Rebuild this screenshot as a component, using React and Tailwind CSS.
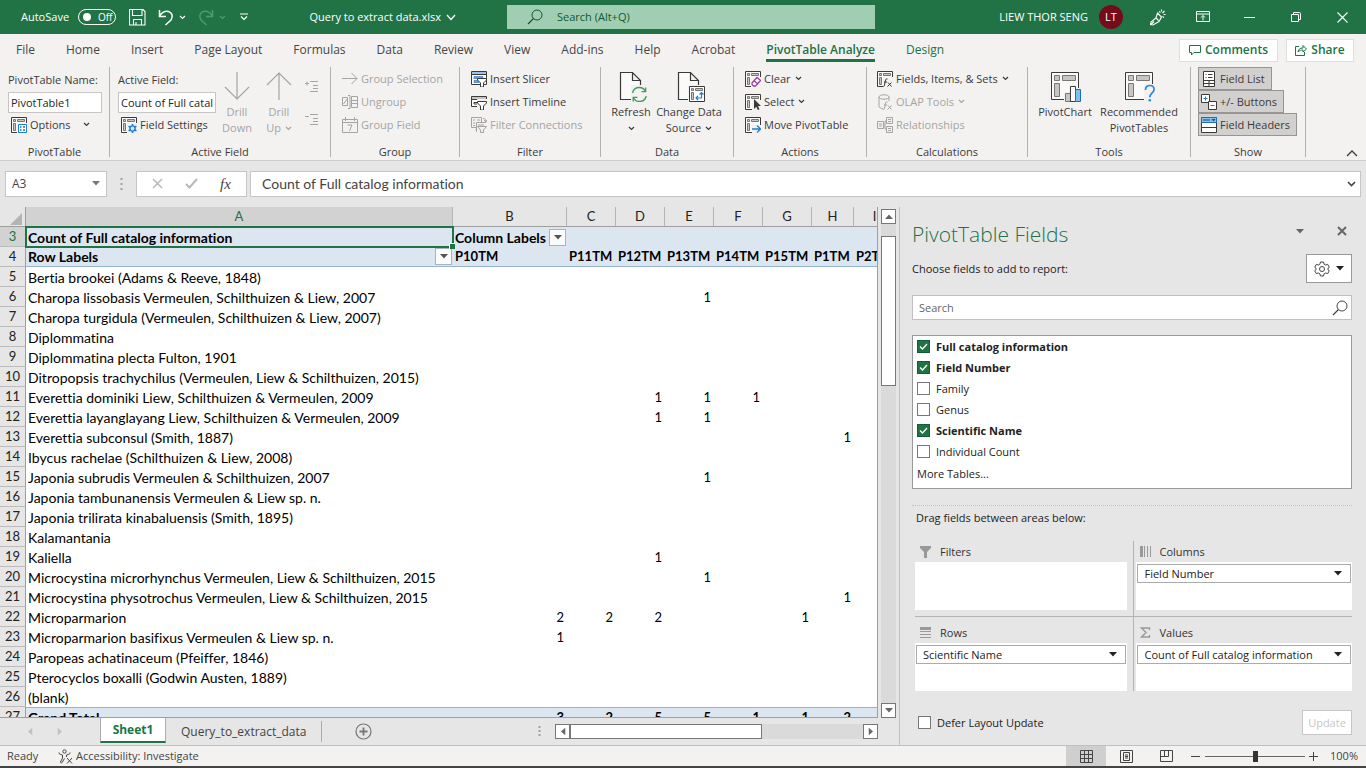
import { useState } from 'react';

const TABS = [
  'File', 'Home', 'Insert', 'Page Layout', 'Formulas', 'Data', 'Review', 'View',
  'Add-ins', 'Help', 'Acrobat', 'PivotTable Analyze', 'Design',
];

const COLUMNS = [
  { letter: 'A', width: 'w-[427px]' },
  { letter: 'B', width: 'w-[114px]', label: 'P10TM' },
  { letter: 'C', width: 'w-[49px]', label: 'P11TM' },
  { letter: 'D', width: 'w-[49px]', label: 'P12TM' },
  { letter: 'E', width: 'w-[49px]', label: 'P13TM' },
  { letter: 'F', width: 'w-[49px]', label: 'P14TM' },
  { letter: 'G', width: 'w-[49px]', label: 'P15TM' },
  { letter: 'H', width: 'w-[42px]', label: 'P1TM' },
  { letter: 'I', width: 'w-[42px]', label: 'P2TM' },
];

const VALUE_COLUMNS = COLUMNS.slice(1);

const ROWS = [
  { n: 5, name: 'Bertia brookei (Adams & Reeve, 1848)' },
  { n: 6, name: 'Charopa lissobasis Vermeulen, Schilthuizen & Liew, 2007', E: 1 },
  { n: 7, name: 'Charopa turgidula (Vermeulen, Schilthuizen & Liew, 2007)' },
  { n: 8, name: 'Diplommatina' },
  { n: 9, name: 'Diplommatina plecta Fulton, 1901' },
  { n: 10, name: 'Ditropopsis trachychilus (Vermeulen, Liew & Schilthuizen, 2015)' },
  { n: 11, name: 'Everettia dominiki Liew, Schilthuizen & Vermeulen, 2009', D: 1, E: 1, F: 1 },
  { n: 12, name: 'Everettia layanglayang Liew, Schilthuizen & Vermeulen, 2009', D: 1, E: 1 },
  { n: 13, name: 'Everettia subconsul (Smith, 1887)', H: 1 },
  { n: 14, name: 'Ibycus rachelae (Schilthuizen & Liew, 2008)' },
  { n: 15, name: 'Japonia subrudis Vermeulen & Schilthuizen, 2007', E: 1 },
  { n: 16, name: 'Japonia tambunanensis Vermeulen & Liew sp. n.' },
  { n: 17, name: 'Japonia trilirata kinabaluensis (Smith, 1895)' },
  { n: 18, name: 'Kalamantania' },
  { n: 19, name: 'Kaliella', D: 1 },
  { n: 20, name: 'Microcystina microrhynchus Vermeulen, Liew & Schilthuizen, 2015', E: 1 },
  { n: 21, name: 'Microcystina physotrochus Vermeulen, Liew & Schilthuizen, 2015', H: 1 },
  { n: 22, name: 'Microparmarion', B: 2, C: 2, D: 2, G: 1 },
  { n: 23, name: 'Microparmarion basifixus Vermeulen & Liew sp. n.', B: 1 },
  { n: 24, name: 'Paropeas achatinaceum (Pfeiffer, 1846)' },
  { n: 25, name: 'Pterocyclos boxalli (Godwin Austen, 1889)' },
  { n: 26, name: '(blank)' },
];

const TOTALS = { B: 3, C: 2, D: 5, E: 5, F: 1, G: 1, H: 2 };

const FIELDS = [
  { name: 'Full catalog information', checked: true },
  { name: 'Field Number', checked: true },
  { name: 'Family', checked: false },
  { name: 'Genus', checked: false },
  { name: 'Scientific Name', checked: true },
  { name: 'Individual Count', checked: false },
];

/* ---------- icons ---------- */

function Svg({ w = 16, h = 16, children, className = '' }) {
  return (
    <svg
      width={w}
      height={h}
      viewBox={`0 0 ${w} ${h}`}
      fill="none"
      stroke="currentColor"
      aria-hidden="true"
      className={`shrink-0 ${className}`}
    >
      {children}
    </svg>
  );
}

function Chevron({ className = '' }) {
  return (
    <Svg w={7} h={5} className={className}>
      <path d="M1 1l2.500 2.500L6 1" strokeWidth="1.200" />
    </Svg>
  );
}

function Triangle({ className = '' }) {
  return (
    <Svg w={8} h={5} className={className}>
      <path d="M0 0h8L4 4.500z" fill="currentColor" stroke="none" />
    </Svg>
  );
}

function PivotBase() {
  return (
    <>
      <path d="M.5.5h15v15H.5z" fill="#fafafa" stroke="#3b3a39" />
      <path d="M2.500 2.500h2v2h-2zM6.500 2.500h7v2h-7zM2.500 6.500h2v7h-2z" fill="#c8c6c4" stroke="#797775" />
    </>
  );
}

const OptionsIcon = () => (
  <Svg>
    <PivotBase />
    <path d="M6 6h10v10H6z" fill="#f3f2f1" stroke="none" />
    <path d="M7.500 7.500h8v8h-8z" fill="#fff" stroke="#1e7fd0" />
    <path d="M9 10h1.500M12 10h2M9 13h1.500M12 13h2" stroke="#1e6fb8" strokeWidth="1.500" />
  </Svg>
);

const FieldSettingsIcon = () => (
  <Svg>
    <PivotBase />
    <path d="M6 6h10v10H6z" fill="#f3f2f1" stroke="none" />
    <circle cx="11.500" cy="11.500" r="2.600" fill="#cfe6f8" stroke="#1e7fd0" strokeWidth="1.400" />
    <path d="M11.500 7v1.800M11.500 14.200V16M7.600 9.200l1.600.9M13.800 12.900l1.600.9M7.600 13.800l1.600-.9M13.800 10.100l1.600-.9" stroke="#1e7fd0" strokeWidth="1.700" />
  </Svg>
);

const DrillArrow = ({ up }) => (
  <Svg w={26} h={32}>
    {up ? <path d="M13 30V2.500M1 15L13 3l12 12" strokeWidth="1.200" /> : <path d="M13 2v27.500M1 17l12 12 12-12" strokeWidth="1.200" />}
  </Svg>
);

const ExpandIcon = ({ minus }) => (
  <Svg w={15} h={14}>
    <path d="M1 4.500h4M6 2.500h8M9 6.500h5M9 9.500h5M6 12.500h8" />
    {!minus && <path d="M3 2.500v4" />}
  </Svg>
);

const GroupSelectionIcon = () => (
  <Svg>
    <path d="M0 7.500h15M9.500 2l5.500 5.500L9.500 13" />
  </Svg>
);

const UngroupIcon = () => (
  <Svg>
    <path d="M.5 3.500h5v8h-5zM1.500 10l3.500-5M6 1.500h2v13H6M9.500 2.500h6v11h-6zM9.500 6.500h6M9.500 9.500h6" />
  </Svg>
);

const GroupFieldIcon = () => (
  <Svg>
    <path d="M.5 2.500h15v13H.5zM.5 5.500h15M3.500 0v4M12.500 0v4M5.500 8h4.500l-2.500 6" />
  </Svg>
);

const Funnel = ({ fill = '#fff', stroke = '#3b3a39' }) => (
  <>
    <path d="M6 5h10v11H6z" fill="#f3f2f1" stroke="none" />
    <path d="M6.500 7.500h9v1.500l-3 3v4h-3v-4l-3-3z" fill={fill} stroke={stroke} />
  </>
);

const SlicerIcon = () => (
  <Svg>
    <path d="M.5.5h15v13H.5z" fill="#fff" stroke="#3b3a39" />
    <path d="M1 1h14v2.500H1z" fill="#9fc3e6" stroke="none" />
    <path d="M1 3.500h14" stroke="#3b3a39" />
    <path d="M3 5.500h9v2H3zM3 9.500h5v2H3z" fill="#5aa5e0" stroke="#2b6fb0" strokeWidth=".6" />
    <path d="M6.500 7.500h9v1.500l-3 3v4h-3v-4l-3-3z" fill="#fff" stroke="#3b3a39" />
  </Svg>
);

const TimelineIcon = () => (
  <Svg>
    <path d="M.5 2.500h15v10H.5z" fill="#fff" stroke="#3b3a39" />
    <path d="M1 3h14v2.500H1z" fill="#c8c6c4" stroke="none" />
    <path d="M1 5.500h14M3 8.500h5v1.500H3z" stroke="#3b3a39" />
    <Funnel />
  </Svg>
);

const FilterConnectionsIcon = () => (
  <Svg>
    <path d="M.5.5h10v10H.5zM2 3h2M6 3h3M2 6h2M6 5.500h3M2 8.500h2M4.500 12.500h3M12 1.500c2 0 3 1 3 3M13 3l2 2 1-2" />
    <path d="M5 5h11v11H5z" fill="#f3f2f1" stroke="none" />
    <path d="M5.500 15V5.500H15M7 8h6M6.500 9.500h9l-3 3.500v2.500h-3V13z" />
  </Svg>
);

const Page = () => (
  <path d="M5.500 2.500h12l8 8v19h-20zM17.500 2.500v8h8" fill="#fafafa" stroke="#3b3a39" strokeWidth="1.200" />
);

const RefreshIcon = () => (
  <Svg w={32} h={32}>
    <Page />
    <path d="M16 15h16v17H16z" fill="#f3f2f1" stroke="none" />
    <path d="M17.500 23c.8-3.300 3.500-5.500 6.800-5.500 2.700 0 5 1.400 6.200 4M30.700 17.500v4.200h-4.200M31.300 26c-.8 3.300-3.500 5.500-6.800 5.500-2.700 0-5-1.400-6.200-4M18.200 31.500v-4.200h4.200" stroke="#3f9c5c" strokeWidth="1.300" />
  </Svg>
);

const ChangeSourceIcon = () => (
  <Svg w={32} h={32}>
    <Page />
    <path d="M15 15h17v17H15z" fill="#f3f2f1" stroke="none" />
    <path d="M16.500 16.500h15v15h-15z" fill="#fff" stroke="#3b3a39" />
    <path d="M18.500 18.500h2v2h-2zM22.500 18.500h7v2h-7zM18.500 22.500h2v7h-2z" fill="#c8c6c4" stroke="#797775" />
    <path d="M28.500 22.500v5.500h-5.500M26.500 24.500l2-2 2 2M25 26l-2 2 2 2" stroke="#1e7fd0" strokeWidth="1.200" />
  </Svg>
);

const ClearIcon = () => (
  <Svg>
    <PivotBase />
    <path d="M6 6h10v10H6z" fill="#f3f2f1" stroke="none" />
    <path d="M7 12l5-5.500 3.500 3L10.500 15H8.500L7 13.500zM9 9.800l3.500 3" fill="#fff" stroke="#a33bb0" strokeWidth="1.300" />
  </Svg>
);

const SelectIcon = () => (
  <Svg>
    <PivotBase />
    <path d="M7 6h9v10H7z" fill="#f3f2f1" stroke="none" />
    <path d="M9 5v10l2.300-2.200 1.500 3.200 1.700-.8-1.500-3.200H16z" fill="#3b3a39" stroke="none" />
  </Svg>
);

const MoveIcon = () => (
  <Svg>
    <PivotBase />
    <path d="M7 8h9v8H7z" fill="#f3f2f1" stroke="none" />
    <path d="M7 12h8.500M12 8.500l3.500 3.500-3.500 3.500" stroke="#1e7fd0" strokeWidth="1.300" />
  </Svg>
);

const FxMark = () => (
  <path d="M10.500 8c-1.500-.5-2 .5-2.200 2l-.8 4c-.2 1.500-1 1.800-1.800 1.500M7 11h3M11 11.500l3.500 4M14.500 11.500l-4 4" />
);

const FieldsItemsIcon = () => (
  <Svg>
    <PivotBase />
    <path d="M6 6h10v10H6z" fill="#f3f2f1" stroke="none" />
    <FxMark />
  </Svg>
);

const OlapIcon = () => (
  <Svg>
    <path d="M2 3v9.500c0 1.200 2 2 4 2M2 3c0-1.300 2.200-2.200 5-2.200S12 1.700 12 3s-2.200 2.200-5 2.200S2 4.300 2 3zM12 3v4" />
    <FxMark />
  </Svg>
);

const RelationshipsIcon = () => (
  <Svg>
    <path d="M.5 4.500h6v7h-6zM2 7h3M2 9h3M9.500.5h6v6h-6zM11 2.500h3M11 4.500h3M9.500 9.500h6v6h-6zM11 11.500h3M11 13.500h3M6.500 8H8V4h1.500M8 8v4h1.500" />
  </Svg>
);

const LargePivot = ({ children }) => (
  <Svg w={32} h={32}>
    <path d="M2.500 2.500h27v27h-27z" fill="#fafafa" stroke="#3b3a39" />
    <path d="M5.500 5.500h5v5h-5zM13.500 5.500h13v5h-13zM5.500 13.500h5v13h-5z" fill="#c8c6c4" stroke="#797775" />
    {children}
  </Svg>
);

const PivotChartIcon = () => (
  <LargePivot>
    <path d="M15 22h5v-7h7v3h5v14H15z" fill="#f3f2f1" stroke="none" />
    <path d="M16.500 23.500h5v8h-5z" fill="#c8c6c4" stroke="#797775" />
    <path d="M21.500 16.500h5v15h-5z" fill="#fff" stroke="#3b3a39" />
    <path d="M26.500 19.500h5v12h-5z" fill="#83beec" stroke="#1e6fb8" />
  </LargePivot>
);

const RecommendedIcon = () => (
  <LargePivot>
    <path d="M21 14h11v18H21z" fill="#f3f2f1" stroke="none" />
    <path d="M22.500 20c0-2.800 1.800-4.500 4.300-4.500s4.300 1.500 4.300 4c0 3.200-4.300 3.700-4.300 7.700" stroke="#2b88d8" strokeWidth="1.700" />
    <circle cx="26.800" cy="30.300" r="1.300" fill="#2b88d8" stroke="none" />
  </LargePivot>
);

const FieldListIcon = () => (
  <Svg>
    <path d="M2.500.5h11v15h-11z" fill="#fff" stroke="#3b3a39" />
    <path d="M2.500 9.500h11M2.500 12.500h11M8 9.500v6M4.500 3.500h1M7 3.500h4.500M4.500 6.500h1M7 6.500h4.500" stroke="#3b3a39" />
  </Svg>
);

const PlusMinusIcon = () => (
  <Svg>
    <path d="M.5.5h8v8h-8z" fill="#fff" stroke="#3b3a39" />
    <path d="M7.500 7.500h8v8h-8z" fill="#fff" stroke="#3b3a39" />
    <path d="M2.500 4.500h4M4.500 2.500v4M9.500 11.500h4" stroke="#1e7fd0" />
  </Svg>
);

const HeadersIcon = () => (
  <Svg>
    <path d="M.5.5h15v15H.5z" fill="#fff" stroke="#3b3a39" />
    <path d="M.5.5h15v5H.5z" fill="#83beec" stroke="#1e6fb8" />
    <path d="M.5 10.500h15" stroke="#3b3a39" />
    <path d="M2 3h7" stroke="#1e4f80" />
    <path d="M10.500 2h4l-2 2.500z" fill="#1e4f80" stroke="none" />
  </Svg>
);

const SearchIcon = ({ className }) => (
  <Svg className={className}>
    <circle cx="10" cy="6" r="5" />
    <path d="M6.500 9.500L1 15" strokeWidth="1.200" />
  </Svg>
);

const SaveIcon = () => (
  <Svg w={17} h={17}>
    <path d="M.5.5h13.500l2 2v13.500H.5zM3.500.5v6h9.500v-6M4.500 16v-5.500h8V16M7 13v3" strokeWidth="1.100" />
  </Svg>
);

const UndoIcon = ({ flip }) => (
  <Svg w={16} h={17} className={flip ? '-scale-x-100' : ''}>
    <path d="M1.500 1v6.500H8M1.500 7C4 3.500 7 1.500 10.500 2.500s5 5 2.500 8.500l-5.500 5" strokeWidth="1.500" />
  </Svg>
);

const PenIcon = () => (
  <Svg w={17} h={17}>
    <path d="M8.500 4l4 4-2.500 4.500-6 3.500-2.500-.5.500-2.500L7 9zM7 9l2.500 2.500M5 12.500l-3 3M10 2.500l1.500 1M12.500.5v2M15.500 2l-2 2M16.500 5.500h-2M13.500 7.500l1.500 1" strokeWidth="1.100" />
  </Svg>
);

const RibbonDisplayIcon = () => (
  <Svg w={14} h={12}>
    <path d="M.5.5h13v10H.5zM.5 3h13M7 9.500v-5M5 6.500l2-2 2 2" />
  </Svg>
);

const GearIcon = () => (
  <Svg w={16} h={16} className="text-[#444]">
    <path d="M6.500 1h3l.6 2.200 1.400.8 2.200-.6 1.500 2.600L13.700 8l1.500 2-1.500 2.600-2.200-.6-1.400.8-.6 2.200h-3l-.6-2.200-1.400-.8-2.200.6L.8 10l1.500-2L.8 6l1.500-2.600 2.200.6 1.400-.8z" />
    <circle cx="8" cy="8" r="2.500" />
  </Svg>
);

const AccessibilityIcon = () => (
  <Svg w={15} h={15}>
    <circle cx="6.500" cy="2.500" r="1.700" />
    <path d="M1 3.500c-.7.800 0 1.500 3.500 2.500v3L2.500 13c0 1.200 1.200 1.200 1.700.3L6.500 9.500M12 3.500c.7.800 0 1.500-3.500 2.500v2M9 9l5 5.500M14 9l-5 5.500" />
  </Svg>
);

/* ---------- ribbon ---------- */

function Group({ title, width, children }) {
  return (
    <section className={`${width} flex shrink-0 flex-col border-r border-[#b3b0ad]`}>
      <div className="flex h-[69px]">{children}</div>
      <h2 className="mt-auto text-center leading-[10px]">{title}</h2>
    </section>
  );
}

function SmallButton({ icon, label, menu, disabled }) {
  return (
    <button type="button" disabled={disabled} className="flex h-[23px] items-center gap-[3px] whitespace-nowrap disabled:text-[#a6a4a2]">
      {icon}
      <span>{label}</span>
      {menu && <Chevron className="ml-px" />}
    </button>
  );
}

function LargeButton({ icon, lines, width, menu, disabled }) {
  return (
    <button type="button" disabled={disabled} className={`${width} flex shrink-0 flex-col items-center whitespace-nowrap pt-[3px] leading-4 disabled:text-[#a6a4a2]`}>
      {icon}
      <span className="mt-[2px]">{lines[0]}</span>
      <span className="flex h-4 items-center gap-1">
        {lines[1]}
        {menu && <Chevron />}
      </span>
    </button>
  );
}

function ShowButton({ icon, label }) {
  return (
    <button type="button" aria-pressed="true" className="flex h-[23px] items-center gap-[3px] whitespace-nowrap border border-[#979593] bg-[#d2d0ce] pl-[2px] pr-[6px]">
      {icon}
      <span>{label}</span>
    </button>
  );
}

function Ribbon() {
  return (
    <div className="flex h-[94px] shrink-0 pb-[3px] pt-px text-[#3b3a39]">
      <Group title="PivotTable" width="w-[110px]">
        <div className="flex flex-col pl-2">
          <label htmlFor="pivot-name" className="h-[26px] leading-[25px]">PivotTable Name:</label>
          <input id="pivot-name" defaultValue="PivotTable1" className="h-[21px] w-[94px] border border-[#c8c6c4] bg-white px-[2px] text-[#252423]" />
          <div className="flex items-center gap-3 pl-[3px]">
            <SmallButton icon={<OptionsIcon />} label="Options" />
            <Chevron />
          </div>
        </div>
      </Group>

      <Group title="Active Field" width="w-[221px]">
        <div className="flex w-[106px] flex-col pl-2">
          <label htmlFor="active-field" className="h-[26px] leading-[25px]">Active Field:</label>
          <input id="active-field" defaultValue="Count of Full catalog information" className="h-[21px] w-[98px] border border-[#c8c6c4] bg-white px-[2px] text-[#252423]" />
          <div className="pl-[3px]">
            <SmallButton icon={<FieldSettingsIcon />} label="Field Settings" />
          </div>
        </div>
        <LargeButton width="w-[42px]" icon={<DrillArrow />} lines={['Drill', 'Down']} disabled />
        <LargeButton width="w-[42px]" icon={<DrillArrow up />} lines={['Drill', 'Up']} menu disabled />
        <div className="flex flex-col gap-[19px] pl-1 pt-3 text-[#a6a4a2]">
          <button type="button" disabled aria-label="Expand Field"><ExpandIcon /></button>
          <button type="button" disabled aria-label="Collapse Field"><ExpandIcon minus /></button>
        </div>
      </Group>

      <Group title="Group" width="w-[129px]">
        <div className="pl-[11px]">
          <SmallButton icon={<GroupSelectionIcon />} label="Group Selection" disabled />
          <SmallButton icon={<UngroupIcon />} label="Ungroup" disabled />
          <SmallButton icon={<GroupFieldIcon />} label="Group Field" disabled />
        </div>
      </Group>

      <Group title="Filter" width="w-[141px]">
        <div className="pl-[11px]">
          <SmallButton icon={<SlicerIcon />} label="Insert Slicer" />
          <SmallButton icon={<TimelineIcon />} label="Insert Timeline" />
          <SmallButton icon={<FilterConnectionsIcon />} label="Filter Connections" disabled />
        </div>
      </Group>

      <Group title="Data" width="w-[133px]">
        <div className="flex pl-2">
          <LargeButton width="w-[44px]" icon={<RefreshIcon />} lines={['Refresh', '']} menu />
          <LargeButton width="w-[72px]" icon={<ChangeSourceIcon />} lines={['Change Data', 'Source']} menu />
        </div>
      </Group>

      <Group title="Actions" width="w-[133px]">
        <div className="pl-[11px]">
          <SmallButton icon={<ClearIcon />} label="Clear" menu />
          <SmallButton icon={<SelectIcon />} label="Select" menu />
          <SmallButton icon={<MoveIcon />} label="Move PivotTable" />
        </div>
      </Group>

      <Group title="Calculations" width="w-[161px]">
        <div className="pl-[10px]">
          <SmallButton icon={<FieldsItemsIcon />} label="Fields, Items, & Sets" menu />
          <SmallButton icon={<OlapIcon />} label="OLAP Tools" menu disabled />
          <SmallButton icon={<RelationshipsIcon />} label="Relationships" disabled />
        </div>
      </Group>

      <Group title="Tools" width="w-[163px]">
        <div className="flex pl-[7px]">
          <LargeButton width="w-[60px]" icon={<PivotChartIcon />} lines={['PivotChart', '']} />
          <LargeButton width="w-[88px]" icon={<RecommendedIcon />} lines={['Recommended', 'PivotTables']} />
        </div>
      </Group>

      <Group title="Show" width="w-[115px]">
        <div className="flex flex-col items-start pl-[7px]">
          <ShowButton icon={<FieldListIcon />} label="Field List" />
          <ShowButton icon={<PlusMinusIcon />} label="+/- Buttons" />
          <ShowButton icon={<HeadersIcon />} label="Field Headers" />
        </div>
      </Group>

      <button type="button" aria-label="Collapse the Ribbon" className="ml-auto mr-2 self-end">
        <Svg w={12} h={8}>
          <path d="M1 7l5-5 5 5" strokeWidth="1.300" />
        </Svg>
      </button>
    </div>
  );
}

/* ---------- top bars ---------- */

function TitleBar() {
  return (
    <header className="flex h-[34px] shrink-0 items-center bg-[#217346] text-white">
      <div className="flex flex-1 items-center">
        <span className="ml-[21px]">AutoSave</span>
        <button type="button" role="switch" aria-checked="false" aria-label="AutoSave" className="ml-[9px] flex h-4 w-[38px] items-center gap-[7px] rounded-full border border-white pl-1 text-[10px]">
          <span className="size-2 rounded-full bg-white" />
          Off
        </button>
        <button type="button" aria-label="Save" className="ml-[13px]"><SaveIcon /></button>
        <button type="button" aria-label="Undo" className="ml-3 flex items-center gap-[5px]"><UndoIcon /><Chevron /></button>
        <button type="button" aria-label="Redo" disabled className="ml-3 flex items-center gap-[5px] text-[#4f9a70]"><UndoIcon flip /><Chevron /></button>
        <button type="button" aria-label="Customize Quick Access Toolbar" className="ml-[14px]">
          <Svg w={8} h={8}><path d="M0 1h8M1 3.500L4 6.500l3-3" strokeWidth="1.200" /></Svg>
        </button>
        <button type="button" className="ml-auto mr-[35px] flex items-center gap-[5px] whitespace-nowrap">
          Query to extract data.xlsx
          <Svg w={10} h={7}><path d="M1 1l4 4.500L9 1" strokeWidth="1.300" /></Svg>
        </button>
      </div>
      <label className="ml-4 flex h-6 w-[368px] items-center bg-[#a0ceb3] pl-5 text-[#0f5a30]">
        <SearchIcon />
        <input type="search" aria-label="Search" placeholder="Search (Alt+Q)" className="ml-[14px] flex-1 bg-transparent outline-none placeholder:text-[#0f5a30] placeholder:opacity-100" />
      </label>
      <div className="flex flex-1 items-center justify-end">
        <span>LIEW THOR SENG</span>
        <span className="ml-[11px] flex size-6 items-center justify-center rounded-full bg-[#750b1c] text-[11px]">LT</span>
        <button type="button" aria-label="Draw" className="ml-[26px]"><PenIcon /></button>
        <button type="button" aria-label="Ribbon Display Options" className="ml-[30px]"><RibbonDisplayIcon /></button>
        <button type="button" aria-label="Minimize" className="ml-[34px]"><Svg w={11} h={11}><path d="M0 5.500h11" /></Svg></button>
        <button type="button" aria-label="Restore" className="ml-[36px]">
          <Svg w={10} h={10}><path d="M.5 2.500h7v7h-7zM2.500 2.500v-2h6c.6 0 1 .4 1 1v6h-2" /></Svg>
        </button>
        <button type="button" aria-label="Close" className="ml-9 mr-[18px]"><Svg w={11} h={11}><path d="M.5.5l10 10M10.500.5l-10 10" strokeWidth="1.100" /></Svg></button>
      </div>
    </header>
  );
}

function TabBar() {
  return (
    <nav className="flex h-8 shrink-0 items-center text-[12px] text-[#484644]">
      <div className="flex gap-[31px] pl-4">
        {TABS.map((tab) => {
          const active = tab === 'PivotTable Analyze';
          return (
            <button
              key={tab}
              type="button"
              className={`flex h-8 flex-col whitespace-nowrap pt-[7px] leading-[17px] ${
                active ? 'font-semibold text-[#217346]' : ''
              } ${tab === 'Design' ? 'text-[#217346]' : ''}`}
            >
              {tab}
              {active && <span className="mt-px h-[3px] w-full bg-[#217346]" />}
            </button>
          );
        })}
      </div>
      <button type="button" className="ml-auto flex h-[23px] w-[99px] items-center justify-center gap-1 border border-[#e1dfdd] bg-white font-semibold text-[#217346]">
        <Svg w={12} h={12}><path d="M.5 1.500h11v7H5l-2.500 2.500V8.500h-2z" /></Svg>
        Comments
      </button>
      <button type="button" className="ml-2 mr-[12px] flex h-[23px] w-[68px] items-center justify-center gap-1 border border-[#e1dfdd] bg-white font-semibold text-[#217346]">
        <Svg w={12} h={12}><path d="M4 2.500H.5v9h9V8M3 8c.3-3 2-4 5-4V1.500L11.500 5 8 8V6C6 6 4.500 6.500 3 8z" /></Svg>
        Share
      </button>
    </nav>
  );
}

function FormulaBar() {
  return (
    <div className="flex h-[47px] shrink-0 items-center border-t border-[#d0cecc] bg-[#e6e6e6] px-[5px] pb-[6px] pt-[5px] text-[12px] text-[#444]">
      <div className="flex h-[26px] w-[102px] items-center border border-[#c6c6c6] bg-white pr-[6px]">
        <input aria-label="Name Box" defaultValue="A3" className="w-0 flex-1 bg-transparent pl-[6px] outline-none" />
        <button type="button" aria-label="Name list"><Triangle className="text-[#777]" /></button>
      </div>
      <Svg w={3} h={12} className="mx-[13px] text-[#a0a0a0]"><path d="M1.500 0v12" strokeWidth="2" strokeDasharray="2 3" /></Svg>
      <div className="flex h-[26px] w-[111px] items-center justify-around border border-[#c6c6c6] bg-white px-1">
        <button type="button" aria-label="Cancel" className="text-[#b8b8b8]"><Svg w={11} h={11}><path d="M1 1l9 9M10 1l-9 9" strokeWidth="1.500" /></Svg></button>
        <button type="button" aria-label="Enter" className="text-[#b8b8b8]"><Svg w={13} h={11}><path d="M1 6l3.500 3.500L12 1" strokeWidth="2" /></Svg></button>
        <button type="button" aria-label="Insert Function" className="font-['Liberation_Serif',serif] text-[15px] italic leading-4">fx</button>
      </div>
      <div className="ml-[3px] flex h-[26px] flex-1 items-center border border-[#c6c6c6] bg-white pr-1">
        <input aria-label="Formula Bar" defaultValue="Count of Full catalog information" className="w-0 flex-1 bg-transparent pl-[11px] font-['Lato','Carlito',sans-serif] text-[14px] outline-none [font-variant-ligatures:none]" />
        <button type="button" aria-label="Expand Formula Bar"><Svg w={9} h={6}><path d="M1 1l3.500 3.500L8 1" strokeWidth="1.600" /></Svg></button>
      </div>
    </div>
  );
}

/* ---------- worksheet ---------- */

function FilterButton({ label }) {
  return (
    <button type="button" aria-label={label} className="flex size-[17px] shrink-0 items-center justify-center border border-[#a5b3c2] bg-[#fbfbfb]">
      <Triangle className="text-[#555]" />
    </button>
  );
}

function RowHeader({ n, active }) {
  return (
    <th
      scope="row"
      className={`border-b border-r border-b-[#bcbcbc] border-r-[#9e9e9e] p-0 text-center font-normal ${
        active ? 'bg-[#d2d2d2] text-[#217346]' : 'bg-[#e6e6e6] text-[#222]'
      }`}
    >
      {n}
    </th>
  );
}

function Worksheet() {
  return (
    <div className="min-h-0 flex-1 overflow-hidden border-b border-r border-[#9e9e9e] bg-white">
      <table className="w-max table-fixed border-separate border-spacing-0 whitespace-nowrap font-['Lato','Carlito',sans-serif] text-[13px] leading-[19px] text-black [font-variant-ligatures:none]">
        <colgroup>
          <col className="w-[26px]" />
          {COLUMNS.map((c) => <col key={c.letter} className={c.width} />)}
        </colgroup>
        <thead>
          <tr className="h-5">
            <th className="border-b border-r border-[#9e9e9e] bg-[#e6e6e6] p-0" aria-label="Select all">
              <Svg w={12} h={12} className="ml-auto mr-[3px] mt-1 text-[#b4b4b4]"><path d="M12 0v12H0z" fill="currentColor" stroke="none" /></Svg>
            </th>
            {COLUMNS.map((c) => (
              <th
                key={c.letter}
                scope="col"
                className={`border-b border-r border-b-[#9e9e9e] border-r-[#b4b4b4] p-0 font-normal ${
                  c.letter === 'A' ? 'bg-[#d2d2d2] text-[#217346]' : 'bg-[#e6e6e6] text-[#222]'
                }`}
              >
                {c.letter}
              </th>
            ))}
          </tr>
        </thead>
        <tbody>
          <tr className="h-5 bg-[#dce6f1] font-bold">
            <RowHeader n={3} active />
            <td className="relative p-0 pl-[2px] text-[14px] outline-2 -outline-offset-1 outline-[#217346]">
              Count of Full catalog information
              <span className="absolute -bottom-[2px] -right-[2px] size-[6px] border-l border-t border-white bg-[#217346]" />
            </td>
            <td className="p-0 pl-[2px] text-[14px]">
              <div className="flex items-center justify-between pr-px">
                Column Labels
                <FilterButton label="Filter columns" />
              </div>
            </td>
            {VALUE_COLUMNS.slice(1).map((c) => <td key={c.letter} className="p-0" />)}
          </tr>
          <tr className="h-5 bg-[#dce6f1] font-bold">
            <RowHeader n={4} />
            <td className="border-b border-[#95b3d7] p-0 pl-[2px] text-[14px]">
              <div className="flex items-center justify-between pr-px">
                Row Labels
                <FilterButton label="Filter rows" />
              </div>
            </td>
            {VALUE_COLUMNS.map((c) => (
              <td key={c.letter} className="border-b border-[#95b3d7] p-0 pl-[2px]">{c.label}</td>
            ))}
          </tr>
          {ROWS.map((row) => (
            <tr key={row.n} className="h-5">
              <RowHeader n={row.n} />
              <td className="p-0 pl-[2px] text-[14px]">{row.name}</td>
              {VALUE_COLUMNS.map((c) => <td key={c.letter} className="p-0 pr-[3px] text-right">{row[c.letter]}</td>)}
            </tr>
          ))}
          <tr className="h-5 bg-[#dce6f1] font-bold">
            <RowHeader n={27} />
            <td className="border-t border-[#95b3d7] p-0 pl-[2px] text-[14px]">Grand Total</td>
            {VALUE_COLUMNS.map((c) => (
              <td key={c.letter} className="border-t border-[#95b3d7] p-0 pr-[3px] text-right">{TOTALS[c.letter]}</td>
            ))}
          </tr>
        </tbody>
      </table>
    </div>
  );
}

function ScrollButton({ label, rotate }) {
  return (
    <button type="button" aria-label={label} className="flex size-[15px] shrink-0 items-center justify-center border border-[#777] bg-white">
      <Triangle className={`text-[#666] ${rotate}`} />
    </button>
  );
}

function VerticalScroll() {
  return (
    <div className="flex w-[21px] shrink-0 flex-col items-center pt-[2px]">
      <ScrollButton label="Scroll up" rotate="rotate-180" />
      <div className="w-[15px] flex-1 bg-[#dadada] pt-[12px]">
        <div className="h-[150px] border border-[#777] bg-white" />
      </div>
      <ScrollButton label="Scroll down" rotate="" />
    </div>
  );
}

function SheetTabs() {
  return (
    <div className="flex h-[27px] shrink-0 text-[12px] text-[#444]">
      <div className="flex w-[100px] items-center gap-[22px] pl-[26px] text-[#c0c0c0]">
        <button type="button" aria-label="Previous sheet"><Triangle className="rotate-90" /></button>
        <button type="button" aria-label="Next sheet"><Triangle className="-rotate-90" /></button>
      </div>
      <button type="button" className="h-[25px] w-[66px] border-x border-b-2 border-x-[#ababab] border-b-[#217346] bg-white pt-px font-bold text-[#217346]">Sheet1</button>
      <button type="button" className="my-[3px] border-r border-[#ababab] px-[15px]">Query_to_extract_data</button>
      <button type="button" aria-label="New sheet" className="ml-[33px] text-[#777]">
        <Svg w={17} h={17}><circle cx="8.500" cy="8.500" r="7.500" strokeWidth="1.200" /><path d="M4.500 8.500h8M8.500 4.500v8" strokeWidth="1.800" /></Svg>
      </button>
      <div className="ml-auto flex w-[361px] items-center">
        <Svg w={3} h={12} className="mr-[14px] text-[#a0a0a0]"><path d="M1.500 0v12" strokeWidth="2" strokeDasharray="2 2" /></Svg>
        <ScrollButton label="Scroll left" rotate="rotate-90" />
        <div className="h-[15px] flex-1 bg-[#dadada]">
          <div className="h-[15px] w-[192px] border border-[#777] bg-white" />
        </div>
        <ScrollButton label="Scroll right" rotate="-rotate-90" />
        <span className="w-[21px]" />
      </div>
    </div>
  );
}

/* ---------- task pane ---------- */

function CheckRow({ label, defaultChecked = false }) {
  const [checked, setChecked] = useState(defaultChecked);
  return (
    <label className={`flex h-[21px] items-center gap-[6px] ${checked ? 'font-bold' : ''}`}>
      <span className="grid">
        <input
          type="checkbox"
          checked={checked}
          onChange={(e) => setChecked(e.target.checked)}
          className="size-[13px] appearance-none border border-[#777] bg-white [grid-area:1/1] checked:border-[#185c37] checked:bg-[#217346]"
        />
        {checked && (
          <Svg w={13} h={13} className="pointer-events-none text-white [grid-area:1/1]"><path d="M3 6.500L5.500 9 10 4" strokeWidth="1.300" /></Svg>
        )}
      </span>
      {label}
    </label>
  );
}

function Area({ title, icon, field, className }) {
  return (
    <section className={className}>
      <h3 className="flex h-[21px] items-center gap-2 pl-1 text-[#333]">
        <span className="text-[#999]">{icon}</span>
        {title}
      </h3>
      <div className="h-12 bg-white px-px pt-[2px]">
        {field && (
          <button type="button" className="flex h-[19px] w-full items-center justify-between border border-[#ababab] bg-white pl-[6px] pr-2">
            {field}
            <Triangle className="text-[#222]" />
          </button>
        )}
      </div>
    </section>
  );
}

function FieldsPane() {
  return (
    <aside className="flex w-[467px] shrink-0 flex-col border-l border-[#c0c0c0] pl-3 pr-[14px] text-[#222]">
      <div className="flex items-start justify-between pt-[13px]">
        <h2 className="text-[21px] font-light leading-7 text-[#217346]">PivotTable Fields</h2>
        <div className="flex items-center gap-[32px] pr-[5px] pt-[6px] text-[#666]">
          <button type="button" aria-label="Task Pane Options"><Triangle className="w-[10px]" /></button>
          <button type="button" aria-label="Close pane"><Svg w={10} h={10}><path d="M1 1l8 8M9 1L1 9" strokeWidth="2" /></Svg></button>
        </div>
      </div>
      <div className="mt-[6px] flex items-center justify-between">
        <span>Choose fields to add to report:</span>
        <button type="button" aria-label="Tools" className="flex h-[29px] w-[46px] items-center justify-center gap-[6px] border border-[#999] bg-white">
          <GearIcon />
          <Triangle className="text-[#222]" />
        </button>
      </div>
      <label className="mt-3 flex h-[25px] items-center border border-[#c0c0c0] bg-white pr-[3px]">
        <input type="search" aria-label="Search fields" placeholder="Search" className="flex-1 bg-transparent pl-[6px] outline-none placeholder:text-[#666] placeholder:opacity-100" />
        <SearchIcon className="text-[#444]" />
      </label>
      <div className="mt-[15px] h-[154px] border border-[#999] bg-white pl-1">
        {FIELDS.map((f) => <CheckRow key={f.name} label={f.name} defaultChecked={f.checked} />)}
        <a href="#more-tables" className="mt-[2px] block leading-5">More Tables...</a>
      </div>
      <div className="mt-4 border-t border-dotted border-[#c0c0c0]" />
      <p className="pl-1 pt-1 leading-4">Drag fields between areas below:</p>
      <div className="mt-[15px] grid grid-cols-[221fr_219fr] pl-[3px]">
        <Area title="Filters" className="border-b border-r border-[#b4b4b4] pb-[6px] pr-[6px]"
          icon={<Svg w={13} h={12}><path d="M1 0h11v2L8 6v6H5V6L1 2z" fill="currentColor" stroke="none" /></Svg>} />
        <Area title="Columns" field="Field Number" className="border-b border-[#b4b4b4] pb-[6px] pl-[2px]"
          icon={<Svg w={11} h={11}><path d="M1.500 0v11" strokeWidth="3" /><path d="M4.500 0v11M7.500 0v11M10.500 0v11" /></Svg>} />
        <Area title="Rows" field="Scientific Name" className="border-r border-[#b4b4b4] pr-[6px] pt-[5px]"
          icon={<Svg w={13} h={11}><path d="M1 1.500h11" strokeWidth="3" /><path d="M1 4.500h11M1 7.500h11M1 10.500h11" /></Svg>} />
        <Area title="Values" field="Count of Full catalog information" className="pl-[2px] pt-[5px]"
          icon={<Svg w={11} h={11}><path d="M9.500 3V1h-8L6 5.500 1.500 10h8V8" strokeWidth="1.400" /></Svg>} />
      </div>
      <div className="mt-[19px] flex items-center justify-between pl-[6px]">
        <CheckRow label="Defer Layout Update" />
        <button type="button" disabled className="h-[25px] w-[50px] border border-[#c6c6c6] bg-white text-[#c6c6c6]">Update</button>
      </div>
    </aside>
  );
}

function StatusBar() {
  return (
    <footer className="flex h-[23px] shrink-0 items-center border-b-2 border-t border-b-[#444] border-t-[#c0c0c0] pl-[7px] pr-2 text-[#444]">
      <span className="w-[51px]">Ready</span>
      <button type="button" className="flex items-center gap-[3px] whitespace-nowrap">
        <AccessibilityIcon />
        Accessibility: Investigate
      </button>
      <div className="ml-auto flex h-full items-center">
        <button type="button" aria-label="Normal view" className="flex h-full w-10 items-center justify-center bg-[#cfcfcf]">
          <Svg w={13} h={13}><path d="M.5.5h12v12H.5zM.5 4.500h12M.5 8.500h12M4.500.5v12M8.500.5v12" /></Svg>
        </button>
        <button type="button" aria-label="Page Layout view" className="flex w-10 justify-center">
          <Svg w={13} h={13}><path d="M.5.5h12v12H.5zM3.500 2.500h6v8h-6zM5 5h3M5 6.500h3M5 8h3" /></Svg>
        </button>
        <button type="button" aria-label="Page Break Preview" className="flex w-10 justify-center">
          <Svg w={13} h={12}><path d="M.5.5h12v11H.5zM4.500.5v6M8.500.5v6M.5 6.500h8" /></Svg>
        </button>
        <button type="button" aria-label="Zoom out" className="ml-[5px]"><Svg w={9} h={9}><path d="M0 4.500h9" /></Svg></button>
        <input
          type="range"
          min="0"
          max="200"
          defaultValue="100"
          aria-label="Zoom"
          className="ml-[5px] h-3 w-[100px] appearance-none bg-[linear-gradient(#666,#666)] bg-[length:100%_1px] bg-center bg-no-repeat [&::-webkit-slider-thumb]:h-[11px] [&::-webkit-slider-thumb]:w-[5px] [&::-webkit-slider-thumb]:appearance-none [&::-webkit-slider-thumb]:bg-[#333]"
        />
        <button type="button" aria-label="Zoom in" className="ml-1"><Svg w={9} h={9}><path d="M0 4.500h9M4.500 0v9" /></Svg></button>
        <span className="ml-3 w-7 text-right">100%</span>
      </div>
    </footer>
  );
}

export default function App() {
  return (
    <div className="flex h-screen flex-col overflow-hidden bg-[#f3f2f1] font-['Open_Sans','Noto_Sans',sans-serif] text-[11px] leading-4">
      <TitleBar />
      <TabBar />
      <Ribbon />
      <FormulaBar />
      <main className="flex min-h-0 flex-1 bg-[#e6e6e6]">
        <div className="flex min-w-0 flex-1 flex-col">
          <div className="flex min-h-0 flex-1">
            <div className="flex min-w-0 flex-1 flex-col">
              <Worksheet />
            </div>
            <VerticalScroll />
          </div>
          <SheetTabs />
        </div>
        <FieldsPane />
      </main>
      <StatusBar />
    </div>
  );
}
